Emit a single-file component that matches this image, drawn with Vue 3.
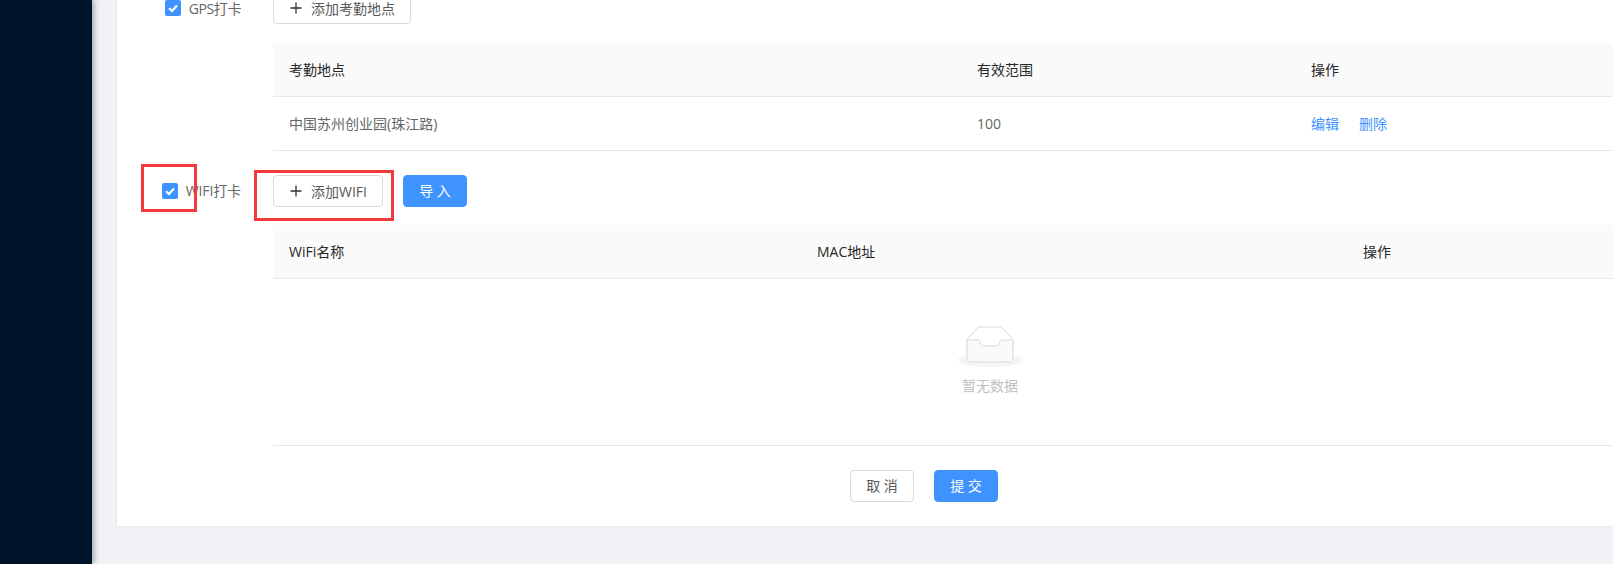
<script setup>
const gpsColumns = [
  { label: '考勤地点', width: '688px' },
  { label: '有效范围', width: '334px' },
  { label: '操作', width: '412px' }
]
const wifiColumns = [
  { label: 'WiFi名称', width: '528px' },
  { label: 'MAC地址', width: '546px' },
  { label: '操作', width: '360px' }
]
const gridOf = (cols) => ({ gridTemplateColumns: cols.map((c) => c.width).join(' ') })
</script>

<template>
  <div class="layout">
    <aside class="sider"></aside>
    <main class="content">
      <section class="card">
        <div class="row gps-row">
          <label class="check">
            <span class="box">
              <svg viewBox="0 0 16 16" width="16" height="16"><path d="M4 8.2 7 11 12 5.4" fill="none" stroke="#fff" stroke-width="2.2" /></svg>
            </span>
            <span>GPS打卡</span>
          </label>
          <button class="btn" type="button">
            <svg class="plus" viewBox="0 0 12 12" width="12" height="12"><path d="M6 .5v11M.5 6h11" stroke="#333" stroke-width="1.3" fill="none" /></svg>
            <span>添加考勤地点</span>
          </button>
        </div>

        <div class="table table-gps">
          <div class="thead" :style="gridOf(gpsColumns)">
            <div v-for="c in gpsColumns" :key="c.label" class="cell raised">{{ c.label }}</div>
          </div>
          <div class="tbody-row" :style="gridOf(gpsColumns)">
            <div class="cell raised">中国苏州创业园(珠江路)</div>
            <div class="cell">100</div>
            <div class="cell raised actions"><a>编辑</a><a>删除</a></div>
          </div>
        </div>

        <div class="row wifi-row">
          <label class="check">
            <span class="box">
              <svg viewBox="0 0 16 16" width="16" height="16"><path d="M4 8.2 7 11 12 5.4" fill="none" stroke="#fff" stroke-width="2.2" /></svg>
            </span>
            <span>WIFI打卡</span>
          </label>
          <div class="wifi-actions">
            <button class="btn" type="button">
              <svg class="plus" viewBox="0 0 12 12" width="12" height="12"><path d="M6 .5v11M.5 6h11" stroke="#333" stroke-width="1.3" fill="none" /></svg>
              <span>添加WIFI</span>
            </button>
            <button class="btn primary wide" type="button">导 入</button>
          </div>
        </div>

        <div class="table table-wifi">
          <div class="thead" :style="gridOf(wifiColumns)">
            <div v-for="c in wifiColumns" :key="c.label" class="cell raised">{{ c.label }}</div>
          </div>
          <div class="empty">
            <svg width="64" height="41" viewBox="0 0 64 41">
              <g transform="translate(0 1)" fill="none" fill-rule="evenodd">
                <ellipse fill="#F5F5F5" cx="32" cy="33" rx="32" ry="7" />
                <g fill-rule="nonzero" stroke="#D9D9D9">
                  <path d="M55 12.76L44.854 1.258C44.367.474 43.656 0 42.907 0H21.093c-.749 0-1.46.474-1.947 1.257L9 12.761V22h46v-9.24z" />
                  <path d="M41.613 15.931c0-1.605.994-2.93 2.227-2.931H55v18.137C55 33.26 53.68 35 52.05 35h-40.1C10.32 35 9 33.259 9 31.137V13h11.16c1.233 0 2.227 1.323 2.227 2.928v.022c0 1.605 1.005 2.901 2.237 2.901h14.752c1.232 0 2.237-1.308 2.237-2.913v-.007z" fill="#FAFAFA" />
                </g>
              </g>
            </svg>
            <p>暂无数据</p>
          </div>
        </div>

        <div class="footer">
          <button class="btn wide" type="button">取 消</button>
          <button class="btn primary wide" type="button">提 交</button>
        </div>
      </section>
    </main>
    <div class="mark mark-check"></div>
    <div class="mark mark-button"></div>
  </div>
</template>

<style>
html, body { margin: 0; overflow: hidden; }
</style>

<style scoped>
.layout {
  position: relative;
  display: flex;
  width: 1613px;
  height: 564px;
  overflow: hidden;
  background: #f0f2f5;
  font-family: "Open Sans", "Noto Sans CJK SC", sans-serif;
  font-size: 14px;
  color: #666;
}
.sider {
  flex: 0 0 92px;
  background: #001529;
  box-shadow: 2px 0 6px rgba(0, 21, 41, 0.35);
  z-index: 1;
}
.content {
  flex: 1;
  min-width: 0;
  padding-left: 24px;
}
.card {
  width: 1620px;
  height: 535px;
  margin-top: -8px;
  box-sizing: border-box;
  background: #fff;
  border: 1px solid #e8e8e8;
  border-width: 0 0 1px 1px;
  display: flex;
  flex-direction: column;
}
.row {
  display: flex;
  align-items: center;
  height: 32px;
  flex: none;
}
.check {
  flex: 0 0 124px;
  margin-right: 32px;
  display: flex;
  align-items: center;
  justify-content: flex-end;
  gap: 8px;
}
.gps-row .check span:last-child { letter-spacing: -0.4px; }
.wifi-row .check span:last-child { letter-spacing: -0.1px; padding-bottom: 2px; }
.box {
  flex: none;
  width: 16px;
  height: 16px;
  border-radius: 2px;
  background: #3e93ff;
  display: flex;
}
.wifi-row { margin-top: 24px; }
.wifi-actions { display: flex; gap: 20px; }
.btn {
  height: 32px;
  box-sizing: border-box;
  padding: 0 15px 0 16px;
  border: 1px solid #d9d9d9;
  border-radius: 4px;
  background: #fff;
  color: #595959;
  font: inherit;
  display: inline-flex;
  align-items: center;
  justify-content: center;
  gap: 9px;
  white-space: nowrap;
}
.btn.primary {
  background: #3e93ff;
  border-color: #3e93ff;
  color: #fff;
}
.wide { width: 64px; padding: 0 0 2px; }
.table { width: 1434px; flex: none; margin-left: 156px; }
.table-gps { margin-top: 19px; }
.table-wifi { margin-top: 18px; }
.thead {
  display: grid;
  height: 54px;
  box-sizing: border-box;
  align-items: center;
  background: #fafafa;
  border-bottom: 1px solid #e8e8e8;
  color: #262626;
}
.tbody-row {
  display: grid;
  height: 54px;
  box-sizing: border-box;
  align-items: center;
  border-bottom: 1px solid #e8e8e8;
}
.cell { padding-left: 16px; }
.raised { padding-bottom: 2px; }
.actions { display: flex; gap: 20px; color: #3e93ff; }
.empty {
  height: 167px;
  box-sizing: border-box;
  border-bottom: 1px solid #e8e8e8;
  padding-top: 47px;
  display: flex;
  flex-direction: column;
  align-items: center;
  color: #bfbfbf;
}
.empty p { margin: 8px 0 0; line-height: 22px; }
.footer {
  display: flex;
  justify-content: flex-start;
  gap: 20px;
  padding: 24px 0 0 733px;
}
.mark {
  position: absolute;
  box-sizing: border-box;
  border: 3px solid #f33a3a;
  pointer-events: none;
}
.mark-check { left: 141px; top: 164px; width: 56px; height: 48px; }
.mark-button { left: 254px; top: 170px; width: 140px; height: 51px; }
</style>
